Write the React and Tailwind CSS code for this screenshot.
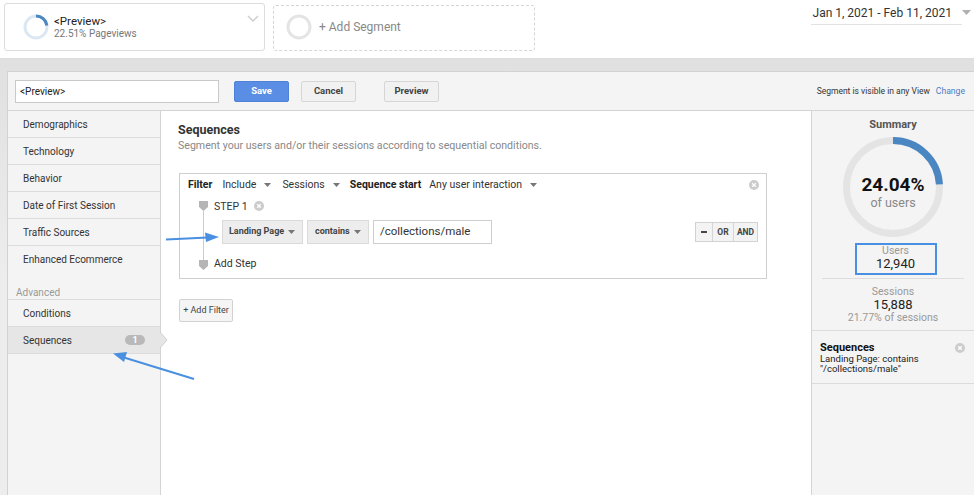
import React from "react";

const Caret = ({ className = "" }) => (
  <svg width="7" height="4" viewBox="0 0 7 4" className={className}>
    <path d="M0 0 H7 L3.5 4 Z" fill="#777" />
  </svg>
);

const CloseIcon = ({ className = "" }) => (
  <svg width="10" height="10" viewBox="0 0 10 10" className={className}>
    <circle cx="5" cy="5" r="5" fill="#cccccc" />
    <path d="M3.2 3.2 L6.8 6.8 M6.8 3.2 L3.2 6.8" stroke="#fff" strokeWidth="1.3" />
  </svg>
);

const Marker = () => (
  <svg width="9" height="10" viewBox="0 0 9 10">
    <path d="M0 0 H9 V6 L4.5 10 L0 6 Z" fill="#b5b5b5" />
  </svg>
);

const NavItem = ({ label, border = true, selected = false, badge }) => (
  <div
    className={`relative h-[27px] flex items-center pl-[15px] pr-[15px] text-[10px] text-[#333] ${
      border ? "border-b border-[#dcdcdc]" : ""
    } ${selected ? "bg-[#e6e6e6]" : ""}`}
  >
    <span>{label}</span>
    {badge && (
      <span className="ml-auto w-[20px] h-[10px] rounded-full bg-[#b9b9b9] text-white text-[9px] leading-[10px] font-bold flex items-center justify-center">
        {badge}
      </span>
    )}
    {selected && (
      <svg width="8" height="16" viewBox="0 0 8 16" className="absolute right-[-8px] top-[5px]">
        <path d="M0 0 L7 8 L0 16 Z" fill="#e6e6e6" />
        <path d="M0 0 L7 8 L0 16" fill="none" stroke="#cfcfcf" strokeWidth="1" />
      </svg>
    )}
  </div>
);

export default function App() {
  const bigC = 2 * Math.PI * 46.5;
  const smallC = 2 * Math.PI * 11;
  return (
    <div className="relative w-[974px] h-[495px] overflow-hidden bg-white font-['Roboto',_'Liberation_Sans',_sans-serif] text-[#333]">
      {/* Header */}
      <div className="h-[59px] bg-white border-b border-[#dedede] flex items-start">
        <div className="ml-[4px] mt-[3px] w-[261px] h-[48px] border border-[#dcdcdc] rounded-[3px] flex items-center pl-[17px] relative">
          <svg width="28" height="28" viewBox="0 0 28 28">
            <circle cx="14" cy="14" r="11" fill="none" stroke="#dbe7f2" strokeWidth="3" />
            <circle
              cx="14"
              cy="14"
              r="11"
              fill="none"
              stroke="#4a86c1"
              strokeWidth="3"
              strokeDasharray={`${smallC * 0.2251} ${smallC}`}
              transform="rotate(-90 14 14)"
            />
          </svg>
          <div className="ml-[4px] flex flex-col">
            <span className="text-[11.5px] leading-[13px] text-[#222]">&lt;Preview&gt;</span>
            <span className="text-[10px] leading-[12px] text-[#777]">22.51% Pageviews</span>
          </div>
          <svg width="12" height="7" viewBox="0 0 12 7" className="ml-auto mr-[5px] self-start mt-[11px]">
            <path d="M1 1 L6 6 L11 1" fill="none" stroke="#cfcfcf" strokeWidth="1.5" />
          </svg>
        </div>
        <div className="ml-[8px] mt-[5px] w-[262px] h-[46px] border border-dashed border-[#d5d5d5] rounded-[3px] flex items-center pl-[12px] pb-[3px]">
          <svg width="26" height="26" viewBox="0 0 26 26">
            <circle cx="13" cy="13" r="11" fill="none" stroke="#e4e4e4" strokeWidth="3" />
          </svg>
          <span className="ml-[7px] text-[12px] text-[#888]">+ Add Segment</span>
        </div>
        <div className="ml-auto mt-[4px] mr-[3px] flex items-center">
          <span className="text-[12px] leading-[18px] text-[#333] border-b border-[#e2e2e2] pb-[2px] pl-[2px] pr-[10px]">
            Jan 1, 2021 - Feb 11, 2021
          </span>
          <svg width="9" height="5" viewBox="0 0 9 5" className="mb-[4px]">
            <path d="M0 0 H9 L4.5 5 Z" fill="#b0b0b0" />
          </svg>
        </div>
      </div>

      {/* Gray band + panel */}
      <div className="h-[436px] bg-gradient-to-b from-[#e0e0e0] via-[#ededed] to-[#ededed] pt-[12px] pl-[7px]">
        <div className="h-full bg-[#f4f4f4] border-t border-l border-[#d2d2d2] flex flex-col">
          {/* Toolbar */}
          <div className="h-[39px] shrink-0 border-b border-[#d4d4d4] flex items-center pl-[7px] pr-[9px]">
            <div className="w-[204px] h-[23px] bg-white border border-[#c9c9c9] flex items-center pl-[4px] text-[10px] text-[#222]">
              &lt;Preview&gt;
            </div>
            <button className="ml-[15px] w-[55px] h-[21px] bg-[#5a8ee4] border border-[#4f82d6] rounded-[2px] text-white text-[9.5px] font-bold">
              Save
            </button>
            <button className="ml-[12px] w-[55px] h-[21px] bg-[#f1f1f1] border border-[#d6d6d6] rounded-[2px] text-[#444] text-[9.5px] font-bold">
              Cancel
            </button>
            <button className="ml-[28px] w-[55px] h-[21px] bg-[#f1f1f1] border border-[#d6d6d6] rounded-[2px] text-[#444] text-[9.5px] font-bold">
              Preview
            </button>
            <span className="ml-auto text-[8.5px] text-[#333]">Segment is visible in any View</span>
            <span className="ml-[6px] text-[8.6px] text-[#4a7cc4]">Change</span>
          </div>

          {/* Body */}
          <div className="flex flex-1 min-h-0">
            {/* Nav */}
            <div className="w-[153px] shrink-0 border-r border-[#d4d4d4] bg-[#f4f4f4] flex flex-col">
              <NavItem label="Demographics" />
              <NavItem label="Technology" />
              <NavItem label="Behavior" />
              <NavItem label="Date of First Session" />
              <NavItem label="Traffic Sources" />
              <NavItem label="Enhanced Ecommerce" border={false} />
              <div className="h-[27px] border-b border-[#dcdcdc] flex items-end pl-[8px] text-[10px] leading-[12px] text-[#999]">
                Advanced
              </div>
              <NavItem label="Conditions" />
              <NavItem label="Sequences" selected badge="1" />
            </div>

            {/* Main */}
            <div className="flex-1 bg-white pl-[17px] pt-[11px]">
              <div className="text-[12.5px] leading-[15px] font-bold text-[#333]">Sequences</div>
              <div className="mt-[2px] text-[10.6px] leading-[14px] text-[#888]">
                Segment your users and/or their sessions according to sequential conditions.
              </div>
              <div className="mt-[20px] ml-[1px] w-[588px] border border-[#cfcfcf] bg-white">
                {/* Filter row */}
                <div className="h-[22px] flex items-center pl-[8px] pr-[7px] text-[10.5px]">
                  <span className="font-bold text-[#222]">Filter</span>
                  <span className="ml-[10px] text-[#333]">Include</span>
                  <Caret className="ml-[8px]" />
                  <span className="ml-[11px] text-[#333]">Sessions</span>
                  <Caret className="ml-[8px]" />
                  <span className="ml-[10px] font-bold text-[#222]">Sequence start</span>
                  <span className="ml-[8px] text-[#333]">Any user interaction</span>
                  <Caret className="ml-[8px]" />
                  <CloseIcon className="ml-auto" />
                </div>
                {/* Steps */}
                <div className="flex pb-[3px]">
                  <div className="ml-[19px] w-[9px] flex flex-col items-center pt-[5px] pb-[5px]">
                    <Marker />
                    <div className="flex-1 w-px bg-[#cccccc]" />
                    <Marker />
                  </div>
                  <div className="ml-[6px] flex-1 flex flex-col pr-[8px]">
                    <div className="h-[22px] flex items-center text-[10.5px] text-[#333]">
                      <span>STEP 1</span>
                      <CloseIcon className="ml-[6px] -mt-[2px]" />
                    </div>
                    <div className="mt-[2px] h-[24px] flex items-center pl-[8px]">
                      <div className="w-[81px] h-[24px] bg-[#ededed] border border-[#dadada] flex items-center pl-[6px] pr-[7px] text-[9px] font-bold text-[#444] whitespace-nowrap">
                        <span>Landing Page</span>
                        <Caret className="ml-auto" />
                      </div>
                      <div className="ml-[4px] w-[62px] h-[24px] bg-[#ededed] border border-[#dadada] flex items-center pl-[7px] pr-[7px] text-[9px] font-bold text-[#444] whitespace-nowrap">
                        <span>contains</span>
                        <Caret className="ml-auto" />
                      </div>
                      <div className="ml-[4px] w-[119px] h-[24px] bg-white border border-[#cfcfcf] flex items-center pl-[6px] text-[11.5px] text-[#333]">
                        /collections/male
                      </div>
                      <div className="ml-auto flex h-[20px] border border-[#d2d2d2] bg-[#f3f3f3] text-[8.5px] font-bold text-[#444]">
                        <div className="w-[17px] flex items-center justify-center border-r border-[#d6d6d6]">
                          <div className="w-[6px] h-[1.5px] bg-[#444]" />
                        </div>
                        <div className="w-[21px] flex items-center justify-center border-r border-[#d6d6d6]">OR</div>
                        <div className="w-[23px] flex items-center justify-center">AND</div>
                      </div>
                    </div>
                    <div className="mt-[9px] h-[22px] flex items-center text-[10.5px] text-[#333]">Add Step</div>
                  </div>
                </div>
              </div>
              <button className="mt-[20px] ml-[1px] w-[54px] h-[23px] bg-[#f5f5f5] border border-[#d2d2d2] rounded-[2px] text-[9px] text-[#444]">
                + Add Filter
              </button>
            </div>

            {/* Summary */}
            <div className="w-[163px] shrink-0 border-l border-[#d4d4d4] bg-[#f4f4f4] flex flex-col items-center">
              <div className="mt-[7px] text-[11px] leading-[14px] font-bold text-[#555]">Summary</div>
              <div className="mt-[5px] grid w-[100px] h-[100px]">
                <svg width="100" height="100" viewBox="0 0 100 100" className="[grid-area:1/1]">
                  <circle cx="50" cy="50" r="46.5" fill="none" stroke="#e4e4e4" strokeWidth="7" />
                  <circle
                    cx="50"
                    cy="50"
                    r="46.5"
                    fill="none"
                    stroke="#4a86c1"
                    strokeWidth="7"
                    strokeDasharray={`${bigC * 0.2404} ${bigC}`}
                    transform="rotate(-90 50 50)"
                  />
                </svg>
                <div className="[grid-area:1/1] flex flex-col items-center justify-center pt-[10px]">
                  <span className="text-[19px] leading-[20px] font-bold text-[#111]">24.04%</span>
                  <span className="text-[12.5px] leading-[15px] text-[#888]">of users</span>
                </div>
              </div>
              <div className="mt-[6px] ml-[5px] w-[82px] h-[32px] border-2 border-[#4a90e2] flex flex-col items-center">
                <span className="text-[10.5px] leading-[12px] text-[#999]">Users</span>
                <span className="text-[13px] leading-[14px] text-[#222]">12,940</span>
              </div>
              <div className="mt-[3px] w-[142px] h-px bg-[#dddddd]" />
              <span className="mt-[7px] text-[10.5px] leading-[12px] text-[#999]">Sessions</span>
              <span className="text-[13px] leading-[14px] text-[#222]">15,888</span>
              <span className="text-[10.5px] leading-[12px] text-[#999]">21.77% of sessions</span>
              <div className="mt-[6px] w-full border-t border-[#dcdcdc]" />
              <div className="w-full pl-[8px] pr-[9px] pt-[10px] pb-[9px] border-b border-[#dcdcdc]">
                <div className="flex items-center justify-between">
                  <span className="text-[11px] leading-[13px] font-bold text-[#111]">Sequences</span>
                  <CloseIcon />
                </div>
                <div className="text-[9.5px] leading-[10px] text-[#222]">Landing Page: contains</div>
                <div className="text-[9.5px] leading-[10px] text-[#222]">"/collections/male"</div>
              </div>
            </div>
          </div>
        </div>
      </div>

      {/* Annotation arrows */}
      <svg
        className="absolute left-0 top-0 pointer-events-none"
        width="974"
        height="495"
        viewBox="0 0 974 495"
      >
        <line x1="166" y1="239.5" x2="208" y2="237.5" stroke="#4a8fe0" strokeWidth="2" />
        <path d="M219 237 L205 232.5 L206 242 Z" fill="#4a8fe0" />
        <line x1="194" y1="379" x2="124" y2="357.5" stroke="#4a8fe0" strokeWidth="2" />
        <path d="M113 353.5 L127 352 L124 362 Z" fill="#4a8fe0" />
      </svg>
    </div>
  );
}
